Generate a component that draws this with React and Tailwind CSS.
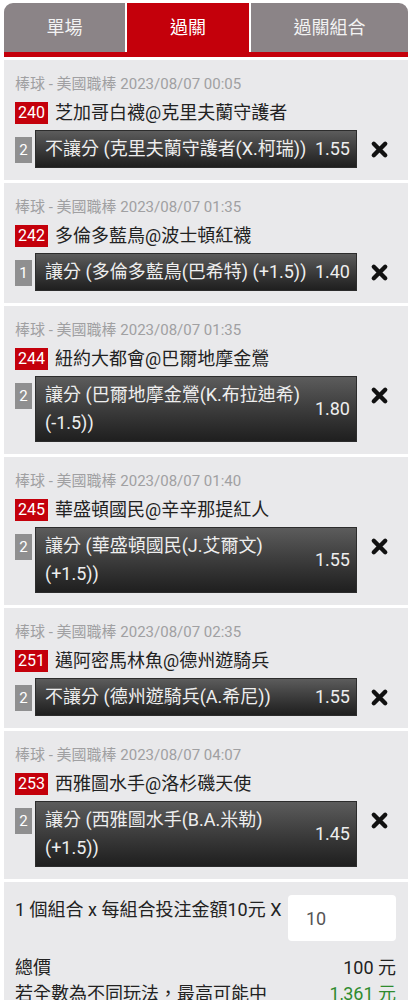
const BETS = [
  {
    time: '2023/08/07 00:05',
    no: '240',
    match: '芝加哥白襪@克里夫蘭守護者',
    seq: '2',
    lines: ['不讓分 (克里夫蘭守護者(X.柯瑞))'],
    odds: '1.55',
  },
  {
    time: '2023/08/07 01:35',
    no: '242',
    match: '多倫多藍鳥@波士頓紅襪',
    seq: '1',
    lines: ['讓分 (多倫多藍鳥(巴希特) (+1.5))'],
    odds: '1.40',
  },
  {
    time: '2023/08/07 01:35',
    no: '244',
    match: '紐約大都會@巴爾地摩金鶯',
    seq: '2',
    lines: ['讓分 (巴爾地摩金鶯(K.布拉迪希)', '(-1.5))'],
    odds: '1.80',
  },
  {
    time: '2023/08/07 01:40',
    no: '245',
    match: '華盛頓國民@辛辛那提紅人',
    seq: '2',
    lines: ['讓分 (華盛頓國民(J.艾爾文)', '(+1.5))'],
    odds: '1.55',
  },
  {
    time: '2023/08/07 02:35',
    no: '251',
    match: '邁阿密馬林魚@德州遊騎兵',
    seq: '2',
    lines: ['不讓分 (德州遊騎兵(A.希尼))'],
    odds: '1.55',
  },
  {
    time: '2023/08/07 04:07',
    no: '253',
    match: '西雅圖水手@洛杉磯天使',
    seq: '2',
    lines: ['讓分 (西雅圖水手(B.A.米勒)', '(+1.5))'],
    odds: '1.45',
  },
]

function CloseIcon() {
  return (
    <svg width="19" height="19" viewBox="0 0 20 20">
      <path d="M4 4 L16 16 M16 4 L4 16" stroke="#111" strokeWidth="4.6" strokeLinecap="round" />
    </svg>
  )
}

function BetCard({ bet }) {
  return (
    <div className="bg-[#e9e9eb] pt-[13px] pb-[12px] pl-[11px] pr-[19px]">
      <p className="text-[15px] leading-[22px] text-[#a0a0a2]">棒球 - 美國職棒 {bet.time}</p>
      <div className="mt-[7px] flex items-center gap-[7px]">
        <span className="h-[22px] bg-[#c4000b] px-[3px] text-[16px] leading-[22px] text-white">{bet.no}</span>
        <span className="text-[18px] leading-[22px] text-[#222]">{bet.match}</span>
      </div>
      <div className="mt-[6px] flex items-start">
        <span className="mt-[7px] flex h-[26px] w-[17px] items-center justify-center bg-[#8f8f90] text-[15px] text-white">
          {bet.seq}
        </span>
        <div className="ml-[3px] flex w-[322px] items-center border border-[#2c2c2c] bg-gradient-to-b from-[#5c5c5c] to-[#1f1f1f] py-[4px] pl-[9px] pr-[6px] text-[18px] leading-[28px] text-[#eeeeee]">
          <div className="flex-1 whitespace-nowrap">
            {bet.lines.map((line) => (
              <div key={line}>{line}</div>
            ))}
          </div>
          <span className="pl-2">{bet.odds}</span>
        </div>
        <span className="ml-[13px] mt-[10px]">
          <CloseIcon />
        </span>
      </div>
    </div>
  )
}

export default function App() {
  return (
    <div
      className="min-h-[1000px] bg-white px-[4px] pt-[3px]"
      style={{ fontFamily: 'Roboto, "Noto Sans CJK TC", sans-serif' }}
    >
      {/* tabs */}
      <div className="flex gap-[2px] overflow-hidden rounded-t-[9px] border-b-[5px] border-[#c4000b] text-[18px]">
        <div className="flex h-[49px] w-[121px] items-center justify-center bg-[#8b8487] text-[#f2f2f2]">單場</div>
        <div className="flex h-[49px] w-[122px] items-center justify-center bg-[#c4000b] text-white">過關</div>
        <div className="flex h-[49px] flex-1 items-center justify-center bg-[#8b8487] text-[#f2f2f2]">過關組合</div>
      </div>

      <div className="mt-[3px] flex flex-col gap-[3px]">
        {BETS.map((bet) => (
          <BetCard key={bet.no} bet={bet} />
        ))}

        {/* summary */}
        <div className="bg-[#e9e9eb] pt-[13px] pb-4 pl-[11px] pr-[12px] text-[18px] text-[#222]">
          <div className="flex items-start justify-between">
            <span className="mt-[3px] leading-[24px]">1 個組合 x 每組合投注金額10元 X</span>
            <div className="flex h-[46px] w-[108px] items-center rounded-[4px] bg-white pl-[18px] text-[#555]">10</div>
          </div>
          <div className="mt-[14px] flex justify-between leading-[26px]">
            <span>總價</span>
            <span>100 元</span>
          </div>
          <div className="flex justify-between leading-[26px]">
            <span>若全數為不同玩法，最高可能中</span>
            <span className="text-[#2e8b2e]">1,361 元</span>
          </div>
        </div>
      </div>
    </div>
  )
}
